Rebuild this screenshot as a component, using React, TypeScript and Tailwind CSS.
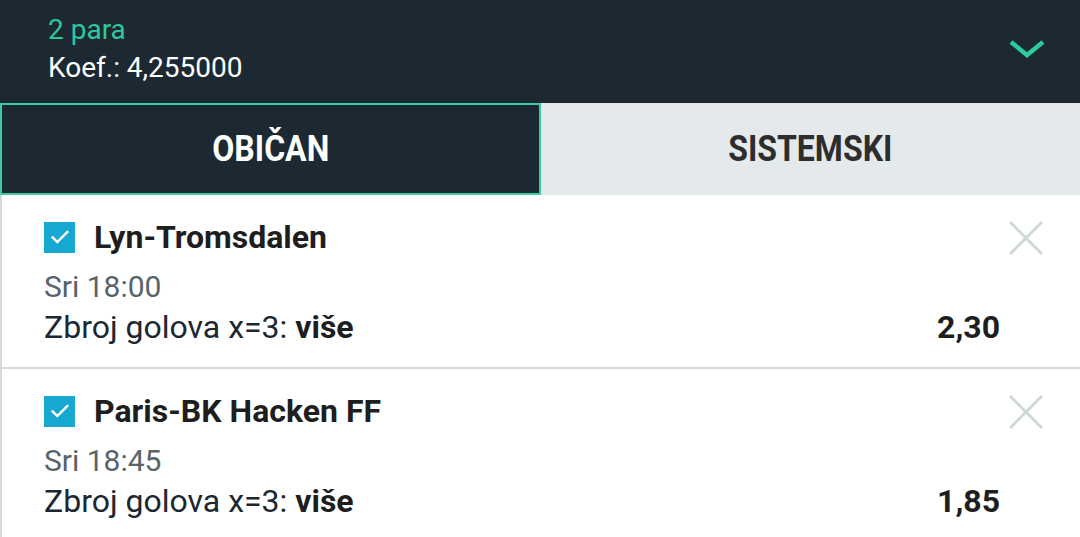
import React from 'react';

type Bet = {
  id: number;
  match: string;
  time: string;
  market: string;
  pick: string;
  odds: string;
};

const bets: Bet[] = [
  { id: 1, match: 'Lyn-Tromsdalen', time: 'Sri 18:00', market: 'Zbroj golova x=3:', pick: 'više', odds: '2,30' },
  { id: 2, match: 'Paris-BK Hacken FF', time: 'Sri 18:45', market: 'Zbroj golova x=3:', pick: 'više', odds: '1,85' },
];

function BetRow({ bet }: { bet: Bet }) {
  return (
    <div className="border-b-2 border-[#d4d9da] pt-[24px] pb-[18px] pl-[42px] pr-[36px]">
      <div className="flex h-[36px] items-center">
        <span className="flex h-[31px] w-[31px] items-center justify-center bg-[#17a8d1]">
          <svg width="22" height="22" viewBox="0 0 24 24" fill="none" stroke="white" strokeWidth="2.6" strokeLinecap="square">
            <path d="M4 12.5l5 5L20 6.5" />
          </svg>
        </span>
        <span className="ml-[19px] text-[32px] font-bold leading-none text-[#1e1e1e]">{bet.match}</span>
        <button className="ml-auto mt-[2px] flex h-[36px] w-[36px] items-center justify-center">
          <svg width="34" height="34" viewBox="0 0 34 34" fill="none" stroke="#cfd8d8" strokeWidth="3">
            <path d="M1 1l32 32M33 1L1 33" />
          </svg>
        </button>
      </div>
      <div className="mt-[14px] text-[30px] leading-[36px] text-[#58636a]">{bet.time}</div>
      <div className="flex h-[44px] items-center text-[32px] text-[#1b2832]">
        <span>
          {bet.market} <b className="font-bold text-[#1e1e1e]">{bet.pick}</b>
        </span>
        <span className="ml-auto mr-[44px] font-bold text-[#1e1e1e]">{bet.odds}</span>
      </div>
    </div>
  );
}

export default function App() {
  return (
    <div className="h-[537px] w-[1080px] overflow-hidden bg-white font-['Roboto',sans-serif]">
      <div className="flex h-[103px] items-start bg-[#1c2933] pl-[48px] pr-[34px]">
        <div className="pt-[12px]">
          <div className="text-[28px] leading-[36px] text-[#2fc79c]">2 para</div>
          <div className="text-[28px] leading-[40px] text-white">Koef.: 4,255000</div>
        </div>
        <svg className="ml-auto mt-[39px]" width="38" height="20" viewBox="0 0 38 20" fill="none" stroke="#2fc99c" strokeWidth="4.5">
          <path d="M3 3l16 13L35 3" />
        </svg>
      </div>

      <div className="flex h-[92px]">
        <div className="flex w-[541px] items-center justify-center border-2 border-[#3ecba2] bg-[#1c2933]">
          <span className="inline-block scale-x-[0.89] text-[36px] font-bold text-white">OBIČAN</span>
        </div>
        <div className="flex flex-1 items-center justify-center bg-[#e4eaec]">
          <span className="inline-block scale-x-[0.89] text-[36px] font-bold text-[#2d2d2d]">SISTEMSKI</span>
        </div>
      </div>

      <div className="border-l-2 border-[#d4d9da]">
        {bets.map((bet) => (
          <BetRow key={bet.id} bet={bet} />
        ))}
      </div>
    </div>
  );
}
